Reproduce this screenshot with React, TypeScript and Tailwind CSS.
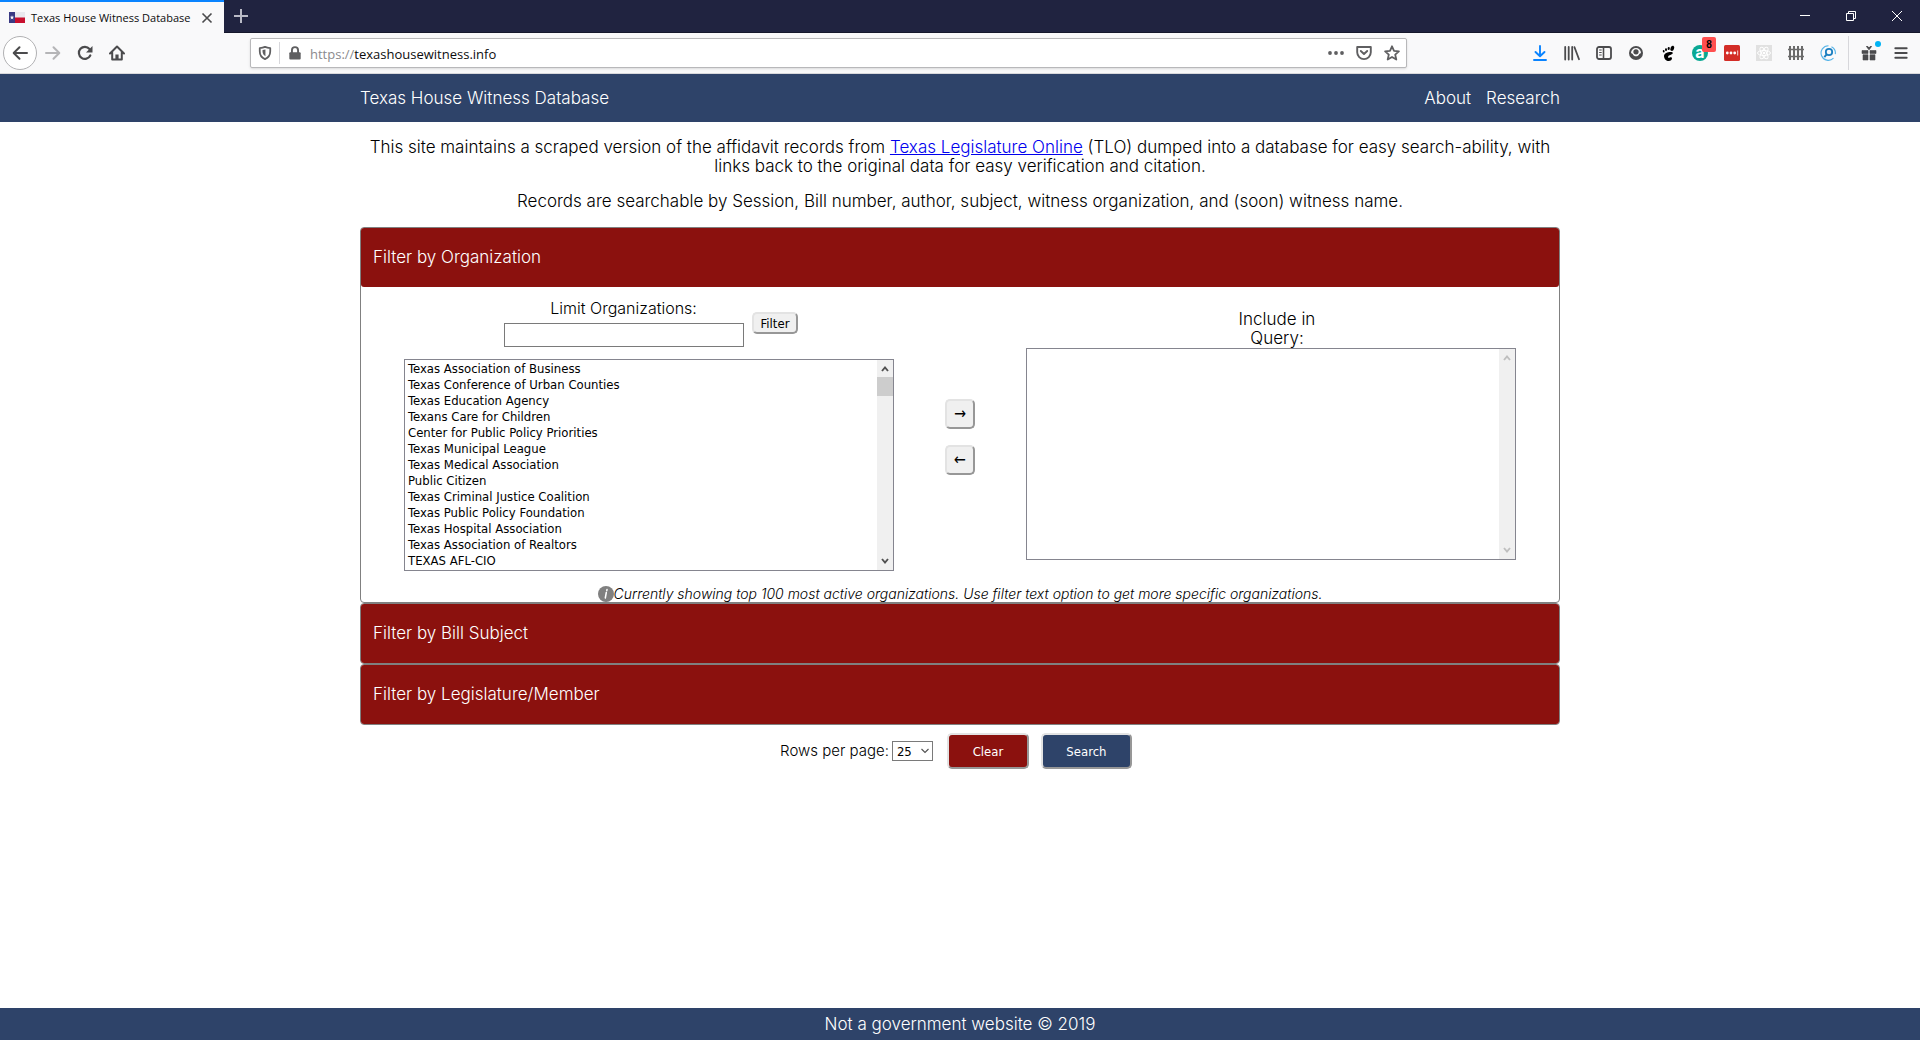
import React from "react";

const organizations = [
  "Texas Association of Business",
  "Texas Conference of Urban Counties",
  "Texas Education Agency",
  "Texans Care for Children",
  "Center for Public Policy Priorities",
  "Texas Municipal League",
  "Texas Medical Association",
  "Public Citizen",
  "Texas Criminal Justice Coalition",
  "Texas Public Policy Foundation",
  "Texas Hospital Association",
  "Texas Association of Realtors",
  "TEXAS AFL-CIO",
];

type IconProps = { children: React.ReactNode; className?: string };

function Icon({ children, className = "size-4" }: IconProps) {
  return (
    <svg viewBox="0 0 16 16" fill="none" aria-hidden="true" className={className}>
      {children}
    </svg>
  );
}

function ToolButton({ label, children }: { label: string; children: React.ReactNode }) {
  return (
    <button type="button" aria-label={label} className="relative flex h-8 w-8 shrink-0 items-center justify-center text-[#4b4b4d]">
      {children}
    </button>
  );
}

function TabStrip() {
  return (
    <div className="flex h-[33px] items-stretch border-b border-[#15172b] bg-[#202340]">
      <div className="-mb-px flex w-56 items-center border-t-2 border-[#0a84ff] bg-[#f9f9fa] pl-[9px] pr-[9px]">
        <svg viewBox="0 0 16 11" className="h-[11px] w-4 shrink-0" aria-hidden="true">
          <rect width="16" height="11" fill="#e9e9ee" />
          <rect y="5.5" width="16" height="5.5" fill="#c8102e" />
          <rect width="6" height="11" fill="#3a3a84" />
          <path d="M3 3.2l.6 1.6h1.6L3.9 5.8l.5 1.7L3 6.5l-1.4 1 .5-1.7L.8 4.8h1.6z" fill="#fff" />
        </svg>
        <span className="ml-1.5 flex-1 whitespace-nowrap font-['Open_Sans',sans-serif] text-[11px] font-normal text-[#0c0c0d]">
          Texas House Witness Database
        </span>
        <button type="button" aria-label="Close tab" className="flex size-4 items-center justify-center text-[#4b4b4d]">
          <Icon className="size-3">
            <path d="M2 2l12 12M14 2L2 14" stroke="currentColor" strokeWidth="2.2" />
          </Icon>
        </button>
      </div>
      <button type="button" aria-label="New tab" className="flex w-[34px] items-center justify-center text-[#b9bac6]">
        <Icon>
          <path d="M8 1v14M1 8h14" stroke="currentColor" strokeWidth="2" />
        </Icon>
      </button>
      <div className="ml-auto flex text-white">
        <button type="button" aria-label="Minimize" className="flex w-[46px] items-center justify-center">
          <svg viewBox="0 0 10 10" className="size-2.5" aria-hidden="true">
            <path d="M0 4.5h10" stroke="currentColor" />
          </svg>
        </button>
        <button type="button" aria-label="Restore" className="flex w-[46px] items-center justify-center">
          <svg viewBox="0 0 10 10" className="size-2.5" fill="none" aria-hidden="true">
            <path d="M.5 2.5h7v7h-7zM2.5 2.5v-2h7v7h-2" stroke="currentColor" />
          </svg>
        </button>
        <button type="button" aria-label="Close window" className="flex w-[46px] items-center justify-center">
          <svg viewBox="0 0 10 10" className="size-2.5" aria-hidden="true">
            <path d="M0 0l10 10M10 0L0 10" stroke="currentColor" />
          </svg>
        </button>
      </div>
    </div>
  );
}

function AddressBar() {
  return (
    <div className="flex h-[30px] min-w-0 flex-1 items-center rounded-xs border border-[#b8b8ba] bg-white shadow-sm">
      <button type="button" aria-label="Tracking protection" className="flex w-7 items-center justify-center text-[#5f5f61]">
        <Icon className="size-3.5">
          <path d="M8 1c2 .9 4 1.200 6 1.300v3.700c0 4.500-2.500 7.500-6 9-3.500-1.500-6-4.500-6-9V2.300C4 2.200 6 1.900 8 1z" stroke="currentColor" strokeWidth="2" strokeLinejoin="round" />
          <path d="M8.500 4v7.800C6.300 10.500 5.200 8.500 5.200 6V4.500z" fill="currentColor" />
        </Icon>
      </button>
      <span className="h-[22px] w-px bg-[#d7d7db]" />
      <span className="flex w-[30px] justify-center text-[#5f5f61]">
        <Icon className="size-3.5">
          <rect x="1.500" y="7" width="13" height="8.500" rx="1.200" fill="currentColor" />
          <path d="M4.500 8V4.800a3.500 3.500 0 0 1 7 0V8" stroke="currentColor" strokeWidth="2.200" />
        </Icon>
      </span>
      <a href="https://texashousewitness.info" className="pt-0.5 font-['Open_Sans',sans-serif] text-[13px] font-normal text-[#0c0c0d]">
        <span className="text-[#8a8a8d]">https://</span>texashousewitness.info
      </a>
      <div className="ml-auto flex items-center text-[#5f5f61]">
        <button type="button" aria-label="Page actions" className="flex w-7 items-center justify-center">
          <Icon>
            <circle cx="2" cy="8" r="1.900" fill="currentColor" />
            <circle cx="8" cy="8" r="1.900" fill="currentColor" />
            <circle cx="14" cy="8" r="1.900" fill="currentColor" />
          </Icon>
        </button>
        <button type="button" aria-label="Save to Pocket" className="flex w-7 items-center justify-center">
          <Icon>
            <path d="M1.200 2h13.600v5.300a6.800 6.800 0 0 1-13.600 0z" stroke="currentColor" strokeWidth="1.900" strokeLinejoin="round" />
            <path d="M4.800 6L8 9l3.200-3" stroke="currentColor" strokeWidth="1.900" strokeLinecap="round" strokeLinejoin="round" />
          </Icon>
        </button>
        <button type="button" aria-label="Bookmark this page" className="flex w-7 items-center justify-center">
          <Icon>
            <path d="M8 1.300l2 4.500 4.900.5-3.700 3.300 1.100 4.900L8 12l-4.300 2.500 1.100-4.900L1.100 6.300 6 5.800z" stroke="currentColor" strokeWidth="1.800" strokeLinejoin="round" />
          </Icon>
        </button>
      </div>
    </div>
  );
}

function Toolbar() {
  return (
    <div className="flex h-[41px] items-center border-b border-[#d9d9dc] bg-[#f9f9fa] px-[3px]">
      <button type="button" aria-label="Back" className="flex size-[34px] shrink-0 items-center justify-center rounded-full border border-[#b1b1b3] bg-white text-[#4b4b4d]">
        <Icon>
          <path d="M15 8H2M7.500 2.200L1.700 8l5.800 5.800" stroke="currentColor" strokeWidth="2" strokeLinecap="round" strokeLinejoin="round" />
        </Icon>
      </button>
      <button type="button" aria-label="Forward" disabled className="flex h-8 w-8 shrink-0 items-center justify-center text-[#b5b5b7]">
        <Icon>
          <path d="M1 8h13M8.500 2.200L14.300 8l-5.800 5.800" stroke="currentColor" strokeWidth="2" strokeLinecap="round" strokeLinejoin="round" />
        </Icon>
      </button>
      <ToolButton label="Reload">
        <Icon>
          <path d="M13.300 10.500A6 6 0 1 1 12.500 4" stroke="currentColor" strokeWidth="2.200" strokeLinecap="round" />
          <path d="M15.500 1v6.500H9z" fill="currentColor" />
        </Icon>
      </ToolButton>
      <ToolButton label="Home">
        <Icon>
          <path d="M1 8.500L8 1.500l7 7M3.200 7.500v7h9.600v-7" stroke="currentColor" strokeWidth="2" strokeLinecap="round" strokeLinejoin="round" />
          <path d="M6.400 15V9.500h3.200V15z" fill="currentColor" />
        </Icon>
      </ToolButton>
      <div className="w-[117px]" />
      <AddressBar />
      <div className="w-[117px]" />
      <ToolButton label="Downloads">
        <Icon className="size-4 text-[#0a84ff]">
          <path d="M8 1v10M3.500 7L8 11.300 12.500 7M2 15h12" stroke="currentColor" strokeWidth="1.900" strokeLinecap="round" strokeLinejoin="round" />
        </Icon>
      </ToolButton>
      <ToolButton label="Library">
        <Icon>
          <path d="M1.200 2v12.500M4.700 2v12.500M8.200 2v12.500M10.500 2.200l4.500 12" stroke="currentColor" strokeWidth="1.800" strokeLinecap="round" />
        </Icon>
      </ToolButton>
      <ToolButton label="Sidebars">
        <Icon>
          <rect x="1" y="2" width="14" height="12" rx="2" stroke="currentColor" strokeWidth="1.800" />
          <path d="M7.500 2v12" stroke="currentColor" strokeWidth="1.600" />
          <path d="M3.200 5h2.500M3.200 7.500h2.500M3.200 10h2.500" stroke="currentColor" />
        </Icon>
      </ToolButton>
      <ToolButton label="Account">
        <Icon className="size-3.5">
          <circle cx="8" cy="8" r="8" fill="currentColor" />
          <path d="M2.300 8a5.700 5.700 0 0 1 11.400 0l-1.900 1c-.7 1.700-2.100 2.700-3.800 2.700S4.900 10.700 4.200 9z" fill="#f9f9fa" />
          <circle cx="8" cy="6.700" r="3" fill="currentColor" />
        </Icon>
      </ToolButton>
      <ToolButton label="GNOME Shell integration">
        <Icon className="size-4 text-black">
          <ellipse cx="12.300" cy="3.300" rx="1.800" ry="2.700" transform="rotate(22 12.300 3.300)" fill="currentColor" />
          <ellipse cx="8.700" cy="3.500" rx="1.100" ry="1.600" transform="rotate(10 8.700 3.500)" fill="currentColor" />
          <ellipse cx="6" cy="4.700" rx="1" ry="1.400" fill="currentColor" />
          <ellipse cx="3.700" cy="6.200" rx=".9" ry="1.300" transform="rotate(-15 3.700 6.200)" fill="currentColor" />
          <path d="M12.800 8.300c.8-2.300-8.800-1.600-8.800 2.700 0 3 2.400 5 4.700 5 1.900 0 3.400-1.200 3.300-2.800-.1-1.300-1.600-1.300-2.300-.6-.9.8-1.900.2-1.500-1 .6-1.600 4-1.600 4.600-3.300z" fill="currentColor" />
        </Icon>
      </ToolButton>
      <ToolButton label="Extension a, 8 notifications">
        <span className="flex size-4 items-center justify-center rounded-full bg-[#0aa893] pb-0.5 font-['Inter',sans-serif] text-base font-bold leading-none text-white">a</span>
        <span className="absolute right-0 top-0 flex h-[15px] w-3.5 items-center justify-center rounded-xs bg-[#ff4f4f] font-['Liberation_Sans',sans-serif] text-[10px] font-bold leading-none text-black">8</span>
      </ToolButton>
      <ToolButton label="Password manager">
        <Icon>
          <rect width="16" height="16" rx="1.500" fill="#d32d27" />
          <circle cx="3.300" cy="8" r="1.400" fill="#fff" />
          <circle cx="7" cy="8" r="1.400" fill="#fff" />
          <circle cx="10.700" cy="8" r="1.400" fill="#fff" />
          <path d="M13.700 5.500v5" stroke="#fff" strokeWidth=".8" />
        </Icon>
      </ToolButton>
      <ToolButton label="React developer tools">
        <Icon>
          <rect width="16" height="16" fill="#e1e1e1" />
          <g stroke="#fff" strokeWidth="1">
            <ellipse cx="8" cy="8" rx="6.500" ry="2.500" />
            <ellipse cx="8" cy="8" rx="6.500" ry="2.500" transform="rotate(60 8 8)" />
            <ellipse cx="8" cy="8" rx="6.500" ry="2.500" transform="rotate(120 8 8)" />
          </g>
          <circle cx="8" cy="8" r="1.300" fill="#fff" />
        </Icon>
      </ToolButton>
      <ToolButton label="Containers">
        <Icon className="size-4 text-[#6b6b6b]">
          <path d="M2 1v14M6 1v14M10 1v14M14 1v14" stroke="currentColor" strokeWidth="2" />
          <path d="M0 4.500h16M0 11.500h16" stroke="currentColor" strokeWidth="1.300" />
        </Icon>
      </ToolButton>
      <ToolButton label="Search extension">
        <Icon>
          <path d="M13.500 13.200A7.300 7.300 0 1 1 8.500.7M11.500 1.700a7.300 7.300 0 0 1 3.800 7.500" stroke="#56b4e8" strokeWidth="1.100" />
          <circle cx="9" cy="7" r="3.200" stroke="#1c7fc0" strokeWidth="1.800" />
          <path d="M6.700 9.300l-2.400 2.800" stroke="#1c7fc0" strokeWidth="2" />
        </Icon>
      </ToolButton>
      <span className="mx-1 h-[34px] w-px shrink-0 bg-[#d7d7db]" />
      <ToolButton label="What's new">
        <Icon>
          <path d="M1 5.500h6v3H1zM9 5.500h6v3H9zM2 9.700h5V15H2zM9 9.700h5V15H9z" fill="currentColor" stroke="currentColor" strokeWidth=".6" />
          <path d="M8 4.700L5.500 1.500h1.300L8 3l1.200-1.500h1.300z" fill="currentColor" stroke="currentColor" />
        </Icon>
        <span className="absolute right-1 top-1 size-1.5 rounded-full bg-[#00b3f4]" />
      </ToolButton>
      <ToolButton label="Open menu">
        <Icon className="size-3.5">
          <path d="M1.500 2.500h13M1.500 8h13M1.500 13.500h13" stroke="currentColor" strokeWidth="2.200" strokeLinecap="round" />
        </Icon>
      </ToolButton>
    </div>
  );
}

function Chevron({ up = false }: { up?: boolean }) {
  return (
    <svg viewBox="0 0 8 8" className="size-2" fill="none" aria-hidden="true">
      <path d={up ? "M1 6l3-3.500L7 6" : "M1 2l3 3.500L7 2"} stroke="currentColor" strokeWidth="1.900" />
    </svg>
  );
}

function ListBox({ id, items, active }: { id: string; items: string[]; active: boolean }) {
  return (
    <div className="flex h-[212px] w-full border border-[#85858f] bg-white">
      <select
        id={id}
        multiple
        aria-label={id === "organizations" ? "Organizations" : undefined}
        className="min-w-0 flex-1 appearance-none overflow-hidden py-px font-['DejaVu_Sans_Condensed','DejaVu_Sans',sans-serif] text-[13px] font-normal text-black outline-none"
      >
        {items.map((name) => (
          <option key={name} className="h-4 min-h-0 px-[3px] py-0 leading-4">
            {name}
          </option>
        ))}
      </select>
      <div className={active ? "flex w-4 flex-col items-center bg-[#f0f0f0] py-[5px] text-[#505050]" : "flex w-4 flex-col items-center bg-[#f0f0f0] py-[5px] text-[#bfbfbf]"}>
        <Chevron up />
        {active && <span className="mt-1 h-[19px] w-full bg-[#cdcdcd]" />}
        <span className="flex-1" />
        <Chevron />
      </div>
    </div>
  );
}

function SectionHeader({ children }: { children: React.ReactNode }) {
  return (
    <button type="button" className="block w-full rounded-[3px] bg-[#8b110e] px-3 py-5 text-left leading-[19px] text-white">
      {children}
    </button>
  );
}

const outset =
  "border-2 border-t-[#e3e3e3] border-l-[#e3e3e3] border-r-[#979797] border-b-[#979797] font-normal font-['DejaVu_Sans_Condensed','DejaVu_Sans',sans-serif]";

export default function App() {
  return (
    <div className="flex min-h-screen flex-col bg-white font-['Inter',sans-serif] text-[17px] font-light leading-[19px] text-black">
      <TabStrip />
      <Toolbar />
      <header className="bg-[#2e4369] text-white">
        <nav className="mx-auto flex h-12 max-w-[1200px] items-center justify-between">
          <a href="#home">Texas House Witness Database</a>
          <div className="flex gap-[15px]">
            <a href="#about">About</a>
            <a href="#research">Research</a>
          </div>
        </nav>
      </header>

      <main className="mx-auto w-full max-w-[1200px] flex-1">
        <p className="mt-4 text-center">
          This site maintains a scraped version of the affidavit records from{" "}
          <a href="#tlo" className="text-[#0000ee] underline">
            Texas Legislature Online
          </a>{" "}
          (TLO) dumped into a database for easy search-ability, with links back to the original data for easy verification and citation.
        </p>
        <p className="my-4 text-center">
          Records are searchable by Session, Bill number, author, subject, witness organization, and (soon) witness name.
        </p>

        <section className="rounded-[4px] border border-[#808080]">
          <SectionHeader>Filter by Organization</SectionHeader>
          <div className="grid grid-cols-[490fr_132fr_490fr] items-center px-[43px] pt-3">
            <div>
              <form className="flex items-center justify-center gap-2 pl-1" onSubmit={(e) => e.preventDefault()}>
                <div className="flex flex-col items-center gap-1.5">
                  <label htmlFor="limit" className="text-base leading-[18px]">
                    Limit Organizations:
                  </label>
                  <input id="limit" type="text" className="h-6 w-60 border border-[#7a7a7a] bg-white px-1" />
                </div>
                <button type="submit" className={`h-[22px] rounded-[5px] bg-[#f0f0f0] px-[7px] text-[13px] leading-none ${outset}`}>
                  Filter
                </button>
              </form>
              <div className="mt-3">
                <ListBox id="organizations" items={organizations} active />
              </div>
            </div>
            <div className="flex flex-col items-center gap-4 pt-1">
              <button type="button" aria-label="Add to query" className={`flex size-[30px] items-center justify-center rounded-[5px] bg-[#f0f0f0] text-base ${outset}`}>
                →
              </button>
              <button type="button" aria-label="Remove from query" className={`flex size-[30px] items-center justify-center rounded-[5px] bg-[#f0f0f0] text-base ${outset}`}>
                ←
              </button>
            </div>
            <div className="flex flex-col items-center">
              <label htmlFor="included" className="ml-3 w-20 text-center">
                Include in Query:
              </label>
              <ListBox id="included" items={[]} active={false} />
            </div>
          </div>
          <p className="mt-3.5 flex items-center justify-center text-sm italic leading-[17px]">
            <svg viewBox="0 0 16 16" className="size-4" aria-hidden="true">
              <circle cx="8" cy="8" r="8" fill="#808080" />
              <path d="M9 3.500l-.2 1.200M8.300 6.500L7.300 12" stroke="#fff" strokeWidth="1.500" strokeLinecap="round" />
            </svg>
            Currently showing top 100 most active organizations. Use filter text option to get more specific organizations.
          </p>
        </section>
        <section className="rounded-[4px] border border-[#808080]">
          <SectionHeader>Filter by Bill Subject</SectionHeader>
        </section>
        <section className="rounded-[4px] border border-[#808080]">
          <SectionHeader>Filter by Legislature/Member</SectionHeader>
        </section>

        <div className="mt-2 flex items-center justify-center pr-2">
          <label htmlFor="rows" className="mr-[3px] text-[15px] leading-[18px]">
            Rows per page:
          </label>
          <div className="relative mr-3.5">
            <select
              id="rows"
              defaultValue="25"
              className="block h-5 w-[41px] appearance-none border border-[#7a7a7a] bg-white pl-1 font-['DejaVu_Sans_Condensed','DejaVu_Sans',sans-serif] text-[13px] font-normal leading-none"
            >
              <option>25</option>
              <option>50</option>
              <option>100</option>
            </select>
            <svg viewBox="0 0 8 8" className="pointer-events-none absolute right-1 top-1.5 size-2" fill="none" aria-hidden="true">
              <path d="M.5 2L4 5.500 7.500 2" stroke="#505050" strokeWidth="1.100" />
            </svg>
          </div>
          <button type="button" className={`mr-3 h-9 w-[82px] rounded-[5px] bg-[#8b110e] text-[13px] text-white ${outset}`}>
            Clear
          </button>
          <button type="button" className={`h-9 w-[91px] rounded-[5px] bg-[#2e4369] text-[13px] text-white ${outset}`}>
            Search
          </button>
        </div>
      </main>

      <footer className="flex h-8 items-center justify-center bg-[#2e4369] text-white">Not a government website © 2019</footer>
    </div>
  );
}
